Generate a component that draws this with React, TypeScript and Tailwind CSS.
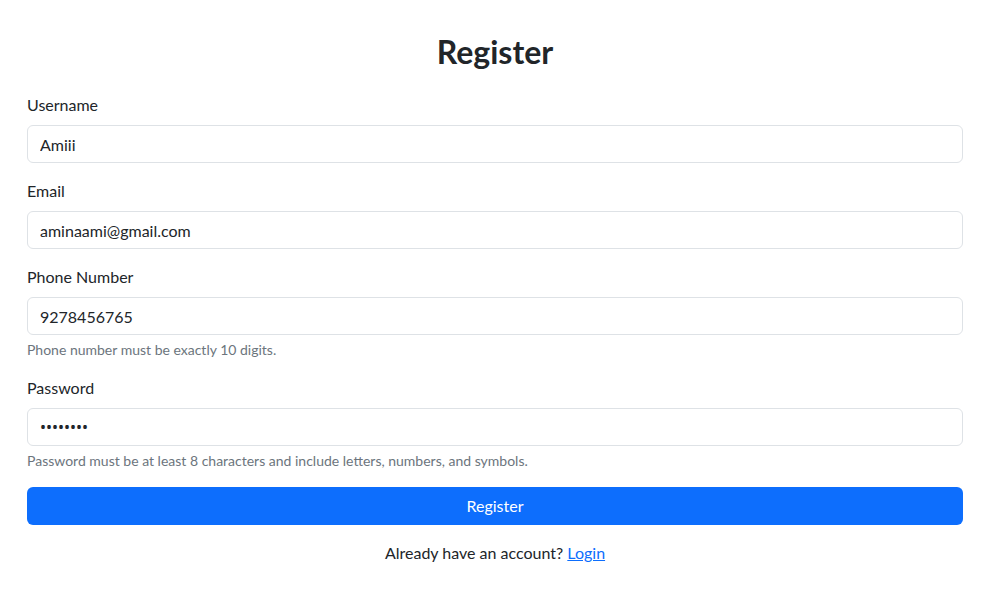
import { useState } from 'react'

function Field({
  label,
  value,
  type = 'text',
  help,
  onChange,
}: {
  label: string
  value: string
  type?: string
  help?: string
  onChange: (v: string) => void
}) {
  return (
    <div className="mb-4">
      <label className="block mb-2 text-[16px] leading-6 text-[#212529]">{label}</label>
      <input
        type={type}
        value={value}
        onChange={(e) => onChange(e.target.value)}
        className={
          type === 'password'
            ? "block w-full h-[38px] px-3 text-[16px] font-['Noto_Sans',sans-serif] text-[#212529] bg-white border border-[#dee2e6] rounded-[6px] outline-none"
            : 'block w-full h-[38px] px-3 text-[16px] text-[#212529] bg-white border border-[#dee2e6] rounded-[6px] outline-none'
        }
      />
      {help && <div className="mt-1 text-[14px] leading-[21px] text-[#6c757d]">{help}</div>}
    </div>
  )
}

export default function App() {
  const [username, setUsername] = useState('Amiii')
  const [email, setEmail] = useState('aminaami@gmail.com')
  const [phone, setPhone] = useState('9278456765')
  const [password, setPassword] = useState('secret12')

  return (
    <div className="min-h-screen bg-white pl-[27px] pr-[33px] pt-[33px] font-['Lato',sans-serif] text-[#212529]">
      <h2 className="mb-[22px] text-center text-[32px] leading-[38px] font-bold">Register</h2>
      <form onSubmit={(e) => e.preventDefault()}>
        <Field label="Username" value={username} onChange={setUsername} />
        <Field label="Email" value={email} type="email" onChange={setEmail} />
        <Field
          label="Phone Number"
          value={phone}
          onChange={setPhone}
          help="Phone number must be exactly 10 digits."
        />
        <Field
          label="Password"
          value={password}
          type="password"
          onChange={setPassword}
          help="Password must be at least 8 characters and include letters, numbers, and symbols."
        />
        <button
          type="submit"
          className="block w-full h-[38px] rounded-[6px] bg-[#0d6efd] text-white text-[16px]"
        >
          Register
        </button>
      </form>
      <p className="mt-4 text-center text-[16px] leading-6">
        Already have an account?{' '}
        <a href="#" className="text-[#0d6efd] underline">
          Login
        </a>
      </p>
    </div>
  )
}
